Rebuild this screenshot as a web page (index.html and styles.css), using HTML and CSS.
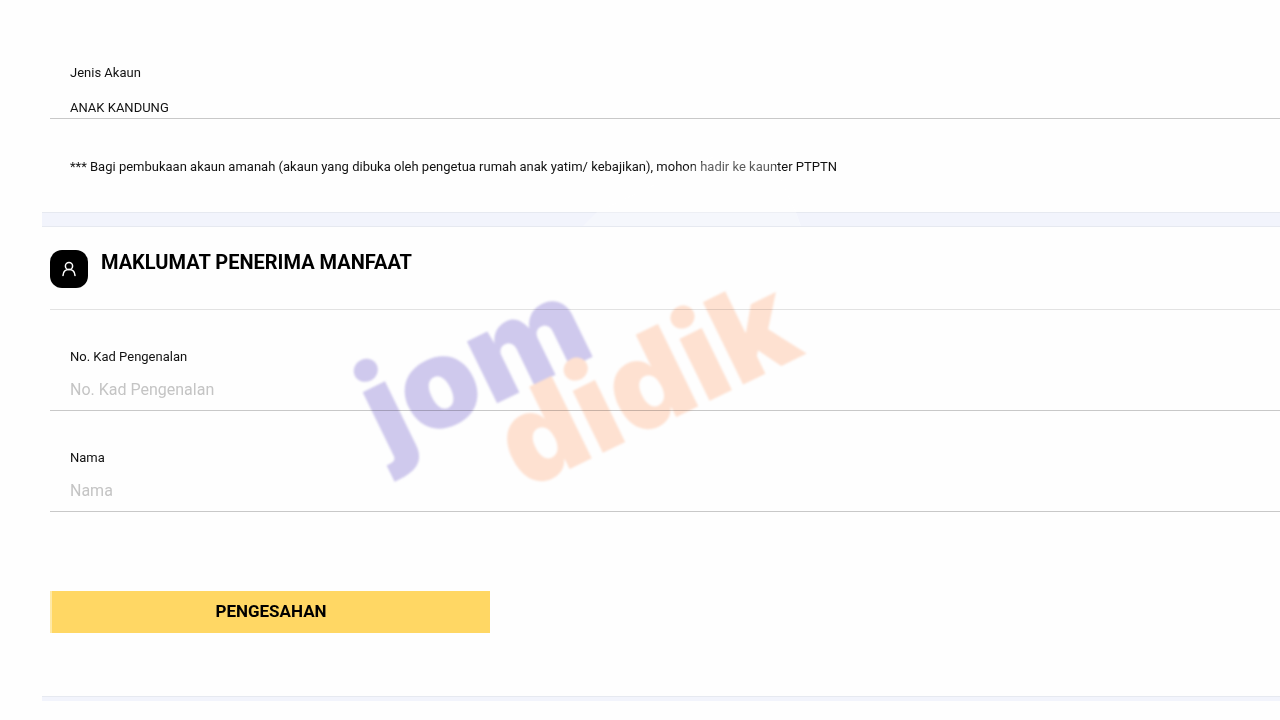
FILE: index.html
```html
<!DOCTYPE html>
<html lang="ms">
<head>
    <meta charset="UTF-8">
    <meta name="viewport" content="width=device-width, initial-scale=1.0">
    <title>Maklumat Penerima Manfaat</title>
    <link rel="stylesheet" href="styles.css">
</head>
<body>
    <form class="page">
        <section class="account">
            <div class="field">
                <label for="jenisAkaun">Jenis Akaun</label>
                <input type="text" id="jenisAkaun" class="field-value" value="ANAK KANDUNG" readonly>
            </div>
            <p class="note">*** Bagi pembukaan akaun amanah (akaun yang dibuka oleh pengetua rumah anak yatim/ kebajikan), mohon hadir ke kaunter PTPTN</p>
        </section>

        <div class="divider"></div>

        <section class="beneficiary">
            <div class="section-header">
                <span class="section-icon">
                    <svg viewBox="0 0 38 38" fill="none" stroke="#fff" stroke-width="1.5" stroke-linecap="round">
                        <circle cx="19" cy="16" r="3.6"/>
                        <path d="M13 25.5c.2-3.6 2.6-5.9 6-5.9s5.8 2.3 6 5.9"/>
                    </svg>
                </span>
                <h2>MAKLUMAT PENERIMA MANFAAT</h2>
            </div>
            <div class="field">
                <label for="noKad">No. Kad Pengenalan</label>
                <input type="text" id="noKad" placeholder="No. Kad Pengenalan">
            </div>
            <div class="field">
                <label for="nama">Nama</label>
                <input type="text" id="nama" placeholder="Nama">
            </div>
            <button type="button" class="confirm-btn">PENGESAHAN</button>
        </section>

        <div class="divider divider-end"></div>
    </form>

    <!-- Watermark over the form -->
    <svg class="watermark-haze" viewBox="0 0 220 78" aria-hidden="true">
        <path d="M0 78L14 64 132 8h56l25 56 5 14z" fill="#fff"/>
    </svg>
    <svg class="watermark" viewBox="0 0 480 240" aria-hidden="true">
        <g transform="rotate(-26)">
            <text x="-42" y="194" class="wm-jom">jom</text>
            <text x="66" y="285" class="wm-didik">didik</text>
        </g>
    </svg>
</body>
</html>
```
FILE: styles.css
```css
* {
    box-sizing: border-box;
}

body {
    margin: 0;
    position: relative;
    font-family: Roboto, 'Liberation Sans', sans-serif;
    font-size: 13px;
    color: #111;
    background: #fefefe;
    overflow-x: hidden;
}

.page {
    padding: 61px 0 19px 42px;
}

.account,
.beneficiary {
    padding-left: 8px;
}

.field {
    display: flex;
    flex-direction: column;
    border-bottom: 1px solid #c8c8c8;
}

.field label {
    padding-left: 20px;
    line-height: 24px;
}

.field input {
    width: 100%;
    height: 41px;
    padding: 0 20px;
    border: none;
    outline: none;
    background: transparent;
    font-family: inherit;
    font-size: 16px;
    color: #111;
}

.field input::placeholder {
    color: #c4c4c4;
    opacity: 1;
}

.field .field-value {
    height: 21px;
    margin-top: 12px;
    font-size: 13px;
}

.note {
    margin: 0;
    padding: 36px 20px 33px;
    line-height: 24px;
}

.divider {
    height: 15px;
    background: #f2f4fc;
    border-top: 1px solid #e6e9f0;
    border-bottom: 1px solid #e6e9f0;
}

.section-header {
    display: flex;
    gap: 13px;
    height: 83px;
    padding-top: 23px;
    border-bottom: 1px solid #e2e2e2;
}

.section-icon {
    width: 38px;
    height: 38px;
    border-radius: 12px;
    background: #000;
}

.section-icon svg {
    display: block;
}

.section-header h2 {
    margin: 0;
    font-size: 20px;
    line-height: 24px;
    font-weight: 700;
    color: #000;
}

.beneficiary .field {
    padding-top: 35px;
}

.confirm-btn {
    display: block;
    width: 100%;
    max-width: 440px;
    height: 42px;
    margin: 79px 0 63px;
    padding-bottom: 4px;
    border: none;
    border-left: 2px solid #ffe9a6;
    background: #ffd764;
    font-family: inherit;
    font-size: 17px;
    font-weight: 700;
    color: #000;
    cursor: pointer;
}

.divider-end {
    height: 5px;
    border-bottom: none;
}

.watermark,
.watermark-haze {
    position: absolute;
    pointer-events: none;
}

.watermark {
    left: 340px;
    top: 264px;
    width: 480px;
    overflow: visible;
    mix-blend-mode: multiply;
    filter: blur(1px);
    font-family: Inter, sans-serif;
    font-size: 126px;
    font-weight: 900;
}

.wm-jom {
    fill: #d0caee;
}

.wm-didik {
    fill: #ffe2d2;
}

.watermark-haze {
    left: 583px;
    top: 148px;
    width: 220px;
    opacity: 0.3;
}
```
